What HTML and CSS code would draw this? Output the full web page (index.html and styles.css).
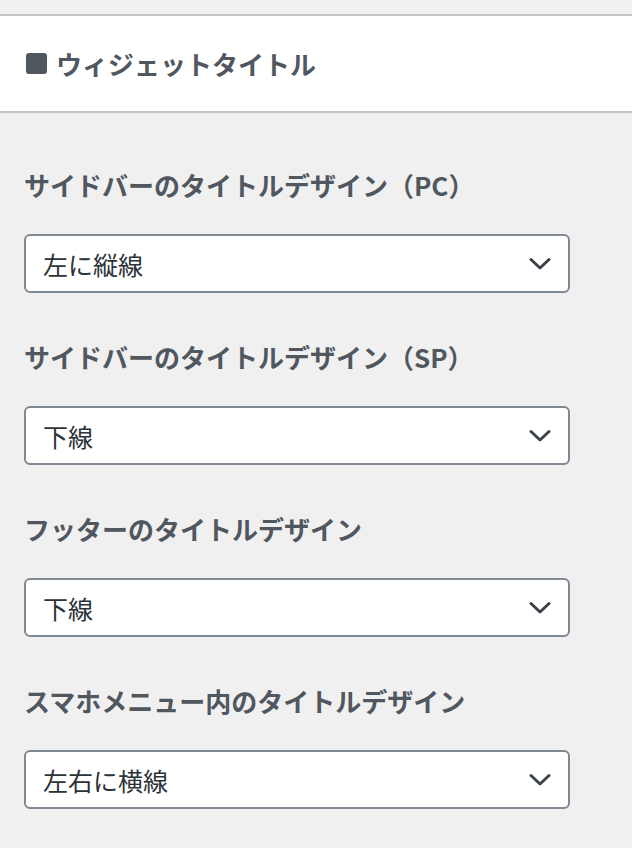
FILE: index.html
```html
<!DOCTYPE html>
<html lang="ja">
<head>
<meta charset="utf-8">
<title>ウィジェットタイトル</title>
<link rel="stylesheet" href="styles.css">
</head>
<body>
<div class="panel">
  <div class="section-head">
    <span class="square"></span>
    <h3 class="section-title">ウィジェットタイトル</h3>
  </div>
  <div class="controls">
    <div class="control">
      <label class="control-label">サイドバーのタイトルデザイン（PC）</label>
      <div class="select"><span class="select-value">左に縦線</span><svg class="chev" width="22" height="14" viewBox="0 0 22 14"><path d="M2 2.5 L11 11 L20 2.5" fill="none" stroke="#3c434a" stroke-width="3" stroke-linecap="round" stroke-linejoin="round"/></svg></div>
    </div>
    <div class="control">
      <label class="control-label">サイドバーのタイトルデザイン（SP）</label>
      <div class="select"><span class="select-value">下線</span><svg class="chev" width="22" height="14" viewBox="0 0 22 14"><path d="M2 2.5 L11 11 L20 2.5" fill="none" stroke="#3c434a" stroke-width="3" stroke-linecap="round" stroke-linejoin="round"/></svg></div>
    </div>
    <div class="control">
      <label class="control-label">フッターのタイトルデザイン</label>
      <div class="select"><span class="select-value">下線</span><svg class="chev" width="22" height="14" viewBox="0 0 22 14"><path d="M2 2.5 L11 11 L20 2.5" fill="none" stroke="#3c434a" stroke-width="3" stroke-linecap="round" stroke-linejoin="round"/></svg></div>
    </div>
    <div class="control">
      <label class="control-label">スマホメニュー内のタイトルデザイン</label>
      <div class="select"><span class="select-value">左右に横線</span><svg class="chev" width="22" height="14" viewBox="0 0 22 14"><path d="M2 2.5 L11 11 L20 2.5" fill="none" stroke="#3c434a" stroke-width="3" stroke-linecap="round" stroke-linejoin="round"/></svg></div>
    </div>
  </div>
</div>
</body>
</html>
```

FILE: styles.css
```css
html, body {
  margin: 0;
  padding: 0;
  background: #f0f0f1;
}
body {
  font-family: "Noto Sans CJK JP", "Noto Sans", sans-serif;
  color: #50575e;
}
.panel {
  padding-top: 14px;
}
.section-head {
  display: flex;
  align-items: center;
  gap: 9px;
  height: 95px;
  padding-left: 26px;
  background: #ffffff;
  border-top: 2px solid #c3c4c7;
  border-bottom: 2px solid #c3c4c7;
}
.square {
  width: 21px;
  height: 21px;
  border-radius: 3px;
  background: #50575e;
  flex: none;
}
.section-title {
  margin: 0;
  font-size: 26px;
  font-weight: 700;
  line-height: 36px;
  color: #50575e;
}
.controls {
  padding: 54px 0 0 24px;
}
.control {
  margin-bottom: 46px;
}
.control-label {
  display: block;
  font-size: 26px;
  font-weight: 700;
  line-height: 36px;
  color: #50575e;
  margin-bottom: 31px;
}
.select {
  box-sizing: border-box;
  width: 546px;
  height: 59px;
  border: 2px solid #7e8993;
  border-radius: 6px;
  background: #ffffff;
  display: flex;
  align-items: center;
  justify-content: space-between;
  padding: 0 17px 0 17px;
}
.select-value {
  font-size: 25px;
  line-height: 36px;
  color: #2c3338;
}
.chev {
  flex: none;
}
```
